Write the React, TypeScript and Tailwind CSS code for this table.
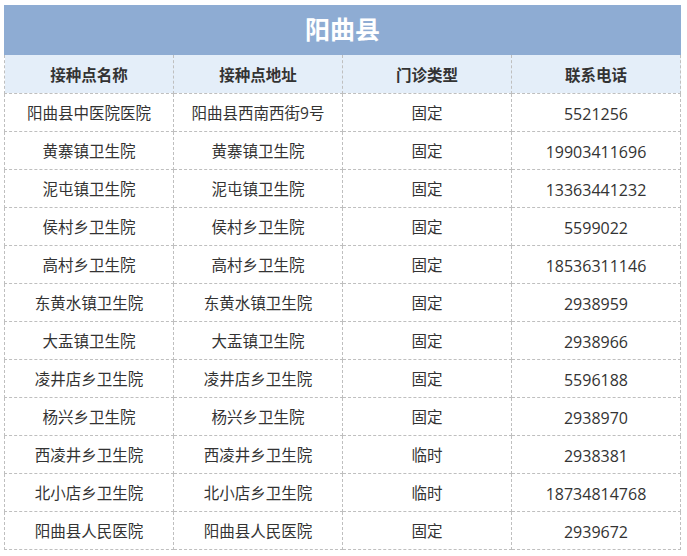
import React from 'react';

type Site = { name: string; address: string; kind: string; phone: string };

const sites: Site[] = [
  { name: '阳曲县中医院医院', address: '阳曲县西南西街9号', kind: '固定', phone: '5521256' },
  { name: '黄寨镇卫生院', address: '黄寨镇卫生院', kind: '固定', phone: '19903411696' },
  { name: '泥屯镇卫生院', address: '泥屯镇卫生院', kind: '固定', phone: '13363441232' },
  { name: '侯村乡卫生院', address: '侯村乡卫生院', kind: '固定', phone: '5599022' },
  { name: '高村乡卫生院', address: '高村乡卫生院', kind: '固定', phone: '18536311146' },
  { name: '东黄水镇卫生院', address: '东黄水镇卫生院', kind: '固定', phone: '2938959' },
  { name: '大盂镇卫生院', address: '大盂镇卫生院', kind: '固定', phone: '2938966' },
  { name: '凌井店乡卫生院', address: '凌井店乡卫生院', kind: '固定', phone: '5596188' },
  { name: '杨兴乡卫生院', address: '杨兴乡卫生院', kind: '固定', phone: '2938970' },
  { name: '西凌井乡卫生院', address: '西凌井乡卫生院', kind: '临时', phone: '2938381' },
  { name: '北小店乡卫生院', address: '北小店乡卫生院', kind: '临时', phone: '18734814768' },
  { name: '阳曲县人民医院', address: '阳曲县人民医院', kind: '固定', phone: '2939672' },
];

const headers = ['接种点名称', '接种点地址', '门诊类型', '联系电话'];

const cell = 'border border-dashed border-[#bfbfbf] h-[38px] pt-[3px] pb-0 px-0 text-center align-middle';

const App: React.FC = () => {
  return (
    <div
      className="bg-white min-h-[556px] pt-[5px] pl-[4px] text-[#333]"
      style={{ fontFamily: '"Open Sans", "Noto Sans CJK SC", sans-serif' }}
    >
      <div className="w-[677px]">
        <div className="h-[50px] bg-[#8eacd3] flex items-center justify-center text-white text-[25px] font-bold">
          阳曲县
        </div>
        <table className="w-full border-collapse table-fixed text-[15.5px]">
          <thead>
            <tr className="bg-[#e4eef9]">
              {headers.map((h) => (
                <th key={h} className={`${cell} font-bold border-t-0`}>
                  {h}
                </th>
              ))}
            </tr>
          </thead>
          <tbody>
            {sites.map((s) => (
              <tr key={s.name}>
                <td className={cell}>{s.name}</td>
                <td className={cell}>{s.address}</td>
                <td className={cell}>{s.kind}</td>
                <td className={`${cell} text-[16px]`}>{s.phone}</td>
              </tr>
            ))}
          </tbody>
        </table>
      </div>
    </div>
  );
};

export default App;
